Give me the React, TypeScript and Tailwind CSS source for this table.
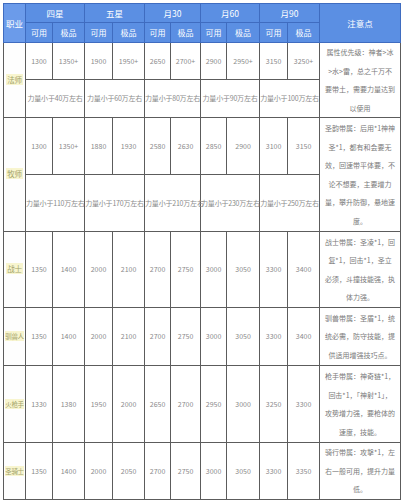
import React from "react";

const font = { fontFamily: '"Noto Sans CJK SC", "Noto Sans", sans-serif' };

const widths = [22, 27, 32, 28, 32, 26, 30, 26, 33, 28, 32, 81];

type Row = {
  name: string;
  nums: string[];
  notes: string[];
  sub?: string[];
  h: number;
  h2?: number;
};

const rows: Row[] = [
  {
    name: "法师",
    nums: ["1300", "1350+", "1900", "1950+", "2650", "2700+", "2900", "2950+", "3150", "3250+"],
    sub: ["力量小于40万左右", "力量小于60万左右", "力量小于80万左右", "力量小于90万左右", "力量小于100万左右"],
    notes: ["属性优先级：神者>冰", ">水>雷，总之千万不", "要带土，需要力量达到", "以使用"],
    h: 37,
    h2: 38,
  },
  {
    name: "牧师",
    nums: ["1300", "1350+", "1880", "1930", "2580", "2630", "2850", "2900", "3100", "3150"],
    sub: ["力量小于110万左右", "力量小于170万左右", "力量小于210万左右", "力量小于230万左右", "力量小于250万左右"],
    notes: ["圣韵带属：后用*1神神", "圣*1，都有和会要无", "效，回速带平体要，不", "论不想要，主要增力", "量，攀升防御，悬地速", "度。"],
    h: 57,
    h2: 57,
  },
  {
    name: "战士",
    nums: ["1350", "1400", "2000", "2100", "2700", "2750", "3000", "3050", "3300", "3400"],
    notes: ["战士带属：圣凌*1，回", "复*1，回击*1，圣立", "必须，斗撞技能强，执", "体力强。"],
    h: 76,
  },
  {
    name: "驯兽人",
    nums: ["1350", "1400", "2000", "2100", "2700", "2750", "3000", "3050", "3300", "3400"],
    notes: ["驯兽带属：圣盾*1，统", "统必需，防守技能，提", "供适用增强技巧点。"],
    h: 58,
  },
  {
    name: "火枪手",
    nums: ["1330", "1380", "1950", "2000", "2650", "2700", "2950", "3000", "3250", "3300"],
    notes: ["枪手带属：神奇链*1，", "回击*1，「神射*1」，", "攻势增力强，要枪体的", "速度，技能。"],
    h: 77,
  },
  {
    name: "圣骑士",
    nums: ["1350", "1400", "2000", "2050", "2700", "2750", "3000", "3050", "3300", "3350"],
    notes: ["骑行带属：攻撃*1，左", "右一般可用，提升力量", "低。"],
    h: 55,
  },
];

const groups = ["四星", "五星", "月30", "月60", "月90"];

function Notes({ lines }: { lines: string[] }) {
  return (
    <div className="px-[1px] text-center text-[7px] leading-[18.5px] text-[#7a7a7a] whitespace-nowrap">
      {lines.map((l, i) => (
        <div key={i}>{l}</div>
      ))}
    </div>
  );
}

function Name({ n }: { n: string }) {
  return (
    <span
      className={
        "bg-[#f8f5cf] text-[#a3a36a] leading-[10px] whitespace-nowrap tracking-[-0.3px] " +
        (n.length > 2 ? "text-[6.5px]" : "text-[7.5px] px-[1px]")
      }
    >
      {n}
    </span>
  );
}

export default function App() {
  const hd = "border border-[#3f6cc0] bg-[#5b8fe3] text-white text-[8.5px] font-normal text-center p-0";
  const cell = "border border-[#5c5c5c] text-center p-0 text-[7px] text-[#8a8a8a] align-middle whitespace-nowrap";
  return (
    <div className="w-[402px] h-[500px] bg-white pt-[3px] pl-[3px]" style={font}>
      <table className="table-fixed border-collapse w-[397px]">
        <colgroup>
          {widths.map((w, i) => (
            <col key={i} style={{ width: w }} />
          ))}
        </colgroup>
        <thead>
          <tr className="h-[19px]">
            <th rowSpan={2} className={hd + " bg-[#6b9bea]"}>职业</th>
            {groups.map((g) => (
              <th key={g} colSpan={2} className={hd}>
                {g}
              </th>
            ))}
            <th rowSpan={2} className={hd}>注意点</th>
          </tr>
          <tr className="h-[20px]">
            {groups.map((g) => (
              <React.Fragment key={g}>
                <th className={hd + " text-[8px]"}>可用</th>
                <th className={hd + " text-[8px]"}>极品</th>
              </React.Fragment>
            ))}
          </tr>
        </thead>
        <tbody>
          {rows.map((r) => (
            <React.Fragment key={r.name}>
              <tr style={{ height: r.h }}>
                <td rowSpan={r.sub ? 2 : 1} className={cell + " bg-[#fefefe]"}>
                  <Name n={r.name} />
                </td>
                {r.nums.map((n, i) => (
                  <td key={i} className={cell}>
                    {n}
                  </td>
                ))}
                <td rowSpan={r.sub ? 2 : 1} className={cell}>
                  <Notes lines={r.notes} />
                </td>
              </tr>
              {r.sub && (
                <tr style={{ height: r.h2 }}>
                  {r.sub.map((s, i) => (
                    <td key={i} colSpan={2} className={cell + " tracking-[-0.2px]"}>
                      {s}
                    </td>
                  ))}
                </tr>
              )}
            </React.Fragment>
          ))}
        </tbody>
      </table>
    </div>
  );
}
